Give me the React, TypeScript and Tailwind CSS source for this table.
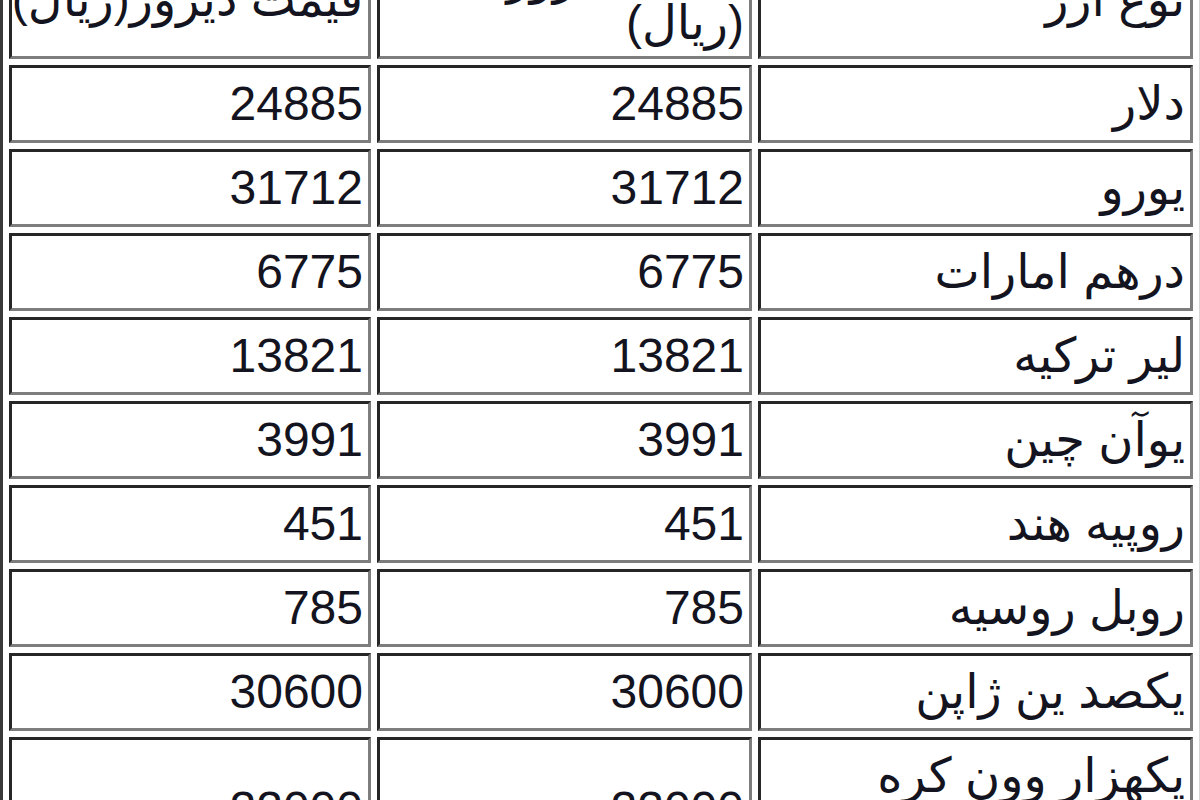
const rows: [string, string, string][] = [
  ['دلار', '24885', '24885'],
  ['یورو', '31712', '31712'],
  ['درهم امارات', '6775', '6775'],
  ['لیر ترکیه', '13821', '13821'],
  ['یوآن چین', '3991', '3991'],
  ['روپیه هند', '451', '451'],
  ['روبل روسیه', '785', '785'],
  ['یکصد ین ژاپن', '30600', '30600'],
];

const cell =
  'border-[3px] border-t-[#262626] border-l-[#262626] border-b-[#7d7d7d] border-r-[#7d7d7d] px-[5px] text-right align-middle';

export default function App() {
  return (
    <div className="w-[1200px] h-[800px] overflow-hidden bg-white">
      <table
        dir="rtl"
        className="mt-[-58px] w-[1200px] table-fixed border-separate border-spacing-[6px] border-[3px] border-t-[#d6d6d6] border-r-[#d6d6d6] border-b-[#3a3a3a] border-l-[#3a3a3a] text-[48px] leading-[46px] text-[#141420]"
        style={{ fontFamily: '"Liberation Sans", "DejaVu Sans", sans-serif' }}
      >
        <colgroup>
          <col className="w-[435px]" />
          <col className="w-[375px]" />
          <col className="w-[362px]" />
        </colgroup>
        <tbody>
          {/* header */}
          <tr>
            <td className={`${cell} pt-0 pb-[10px]`}>نوع ارز</td>
            <td className={`${cell} pt-0 pb-[10px]`}>
              قیمت امروز
              <br />
              (ریال)
            </td>
            <td className={`${cell} pt-0 pb-[10px] whitespace-nowrap`}>قیمت دیروز(ریال)</td>
          </tr>
          {rows.map(([name, today, yesterday]) => (
            <tr key={name}>
              <td className={`${cell} py-[13px]`}>{name}</td>
              <td className={`${cell} py-[13px]`}>{today}</td>
              <td className={`${cell} py-[13px]`}>{yesterday}</td>
            </tr>
          ))}
          <tr>
            <td className={`${cell} py-[13px]`}>
              یکهزار وون کره
              <br />
              جنوبی
            </td>
            <td className={`${cell} pt-[33px] pb-[13px]`}>22000</td>
            <td className={`${cell} pt-[33px] pb-[13px]`}>22000</td>
          </tr>
        </tbody>
      </table>
    </div>
  );
}
